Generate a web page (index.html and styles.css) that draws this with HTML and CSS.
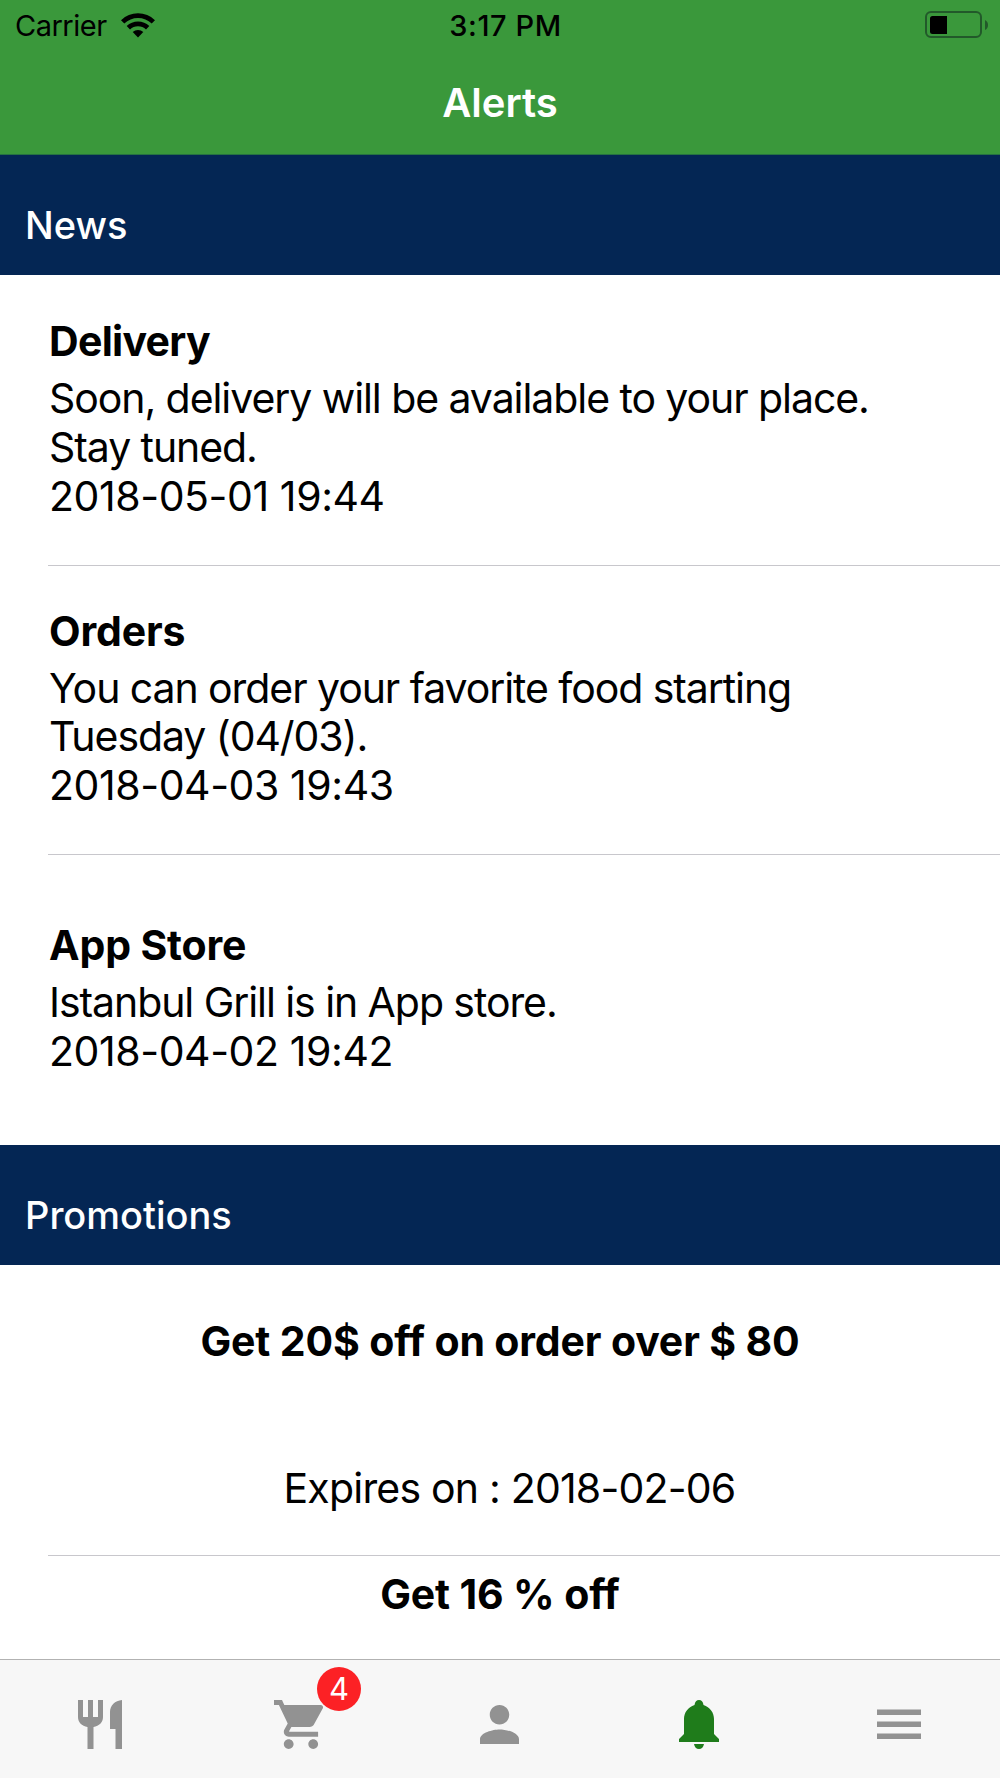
FILE: index.html
```html
<!DOCTYPE html>
<html lang="en">
<head>
  <meta charset="UTF-8" />
  <meta name="viewport" content="width=device-width, initial-scale=1.0"/>
  <title>Alerts</title>
  <link rel="stylesheet" href="styles.css">
</head>
<body>
  <div class="app">
    <header class="navbar">
      <div class="status-bar">
        <div class="carrier">
          <span>Carrier</span>
          <svg class="wifi" viewBox="0 0 34 25">
            <path d="M0 7.2a24.5 24.5 0 0 1 34 0l-3.3 3.4a19.5 19.5 0 0 0-27.4 0z"/>
            <path d="M5.7 13.1a16.3 16.3 0 0 1 22.6 0l-3.3 3.3a11.6 11.6 0 0 0-16 0z"/>
            <path d="M11.7 19.1a7.8 7.8 0 0 1 10.6 0L17 24.5z"/>
          </svg>
        </div>
        <span class="time">3:17 PM</span>
        <svg class="battery" viewBox="0 0 64 28">
          <rect class="battery-case" x="1" y="1" width="55" height="25" rx="5"/>
          <rect x="5" y="5" width="17" height="18" rx="2.5"/>
          <path d="M14 5h8v18h-8z"/>
          <path class="battery-cap" d="M60 9q3 1.5 3 5t-3 5z"/>
        </svg>
      </div>
      <h1>Alerts</h1>
    </header>

    <main class="list">
      <h2>News</h2>
      <article class="news">
        <h3 class="tight">Delivery</h3>
        <p class="message">Soon, delivery will be available to your place.<br>Stay tuned.</p>
        <p class="date">2018-05-01 19:44</p>
      </article>
      <article class="news">
        <h3>Orders</h3>
        <p class="message">You can order your favorite food starting<br>Tuesday (04/03).</p>
        <p class="date">2018-04-03 19:43</p>
      </article>
      <article class="news news-last">
        <h3>App Store</h3>
        <p class="message">Istanbul Grill is in App store.</p>
        <p class="date">2018-04-02 19:42</p>
      </article>

      <h2>Promotions</h2>
      <article class="promo">
        <h3>Get 20$ off on order over $ 80</h3>
        <p class="expires">Expires on : 2018-02-06</p>
      </article>
      <article class="promo promo-short">
        <h3>Get 16 % off</h3>
      </article>
    </main>

    <nav class="tabs">
      <a class="tab tab-menu">
        <svg class="icon" viewBox="0 0 44 49">
          <path d="M0 0h5v17h5V0h5v17h5V0h5v17c0 5.500-3.800 9-9.500 10v22h-6V27C3.800 26 0 22.500 0 17zM44 0v49h-6.500V29H32V12C32 5.500 37 .5 44 0z"/>
        </svg>
      </a>
      <a class="tab tab-cart">
        <svg class="icon cart" viewBox="1 2 20 20" preserveAspectRatio="none">
          <path d="M7 18c-1.100 0-1.990.9-1.990 2S5.900 22 7 22s2-.9 2-2-.9-2-2-2zM1 2v2h2l3.600 7.590-1.350 2.450c-.16.280-.25.610-.25.960 0 1.100.9 2 2 2h12v-2H7.420c-.14 0-.25-.11-.25-.25l.03-.12.900-1.630h7.450c.75 0 1.410-.41 1.750-1.030l3.580-6.490A1 1 0 0 0 20 4H5.210l-.94-2H1zm16 16c-1.100 0-1.990.9-1.990 2s.89 2 1.990 2 2-.9 2-2-.9-2-2-2z"/>
        </svg>
        <span class="badge">4</span>
      </a>
      <a class="tab">
        <svg class="icon person" viewBox="4 4 16 16">
          <path d="M12 12c2.210 0 4-1.790 4-4s-1.790-4-4-4-4 1.790-4 4 1.790 4 4 4zm0 2c-2.670 0-8 1.340-8 4v2h16v-2c0-2.660-5.330-4-8-4z"/>
        </svg>
      </a>
      <a class="tab active">
        <svg class="icon bell" viewBox="0 0 40 49">
          <path d="M20 0c2.500 0 4 1.600 4.500 5C31 7.500 35 12.500 35 19v15l5 5v3H0v-3l5-5V19C5 12.500 9 7.500 15.500 5 16 1.600 17.500 0 20 0zM15 44h10c-.5 3-2.300 5-5 5s-4.500-2-5-5z"/>
        </svg>
      </a>
      <a class="tab">
        <svg class="icon" viewBox="0 0 44 30">
          <path d="M0 0h44v5.500H0zM0 12h44v5.500H0zM0 24h44v5.500H0z"/>
        </svg>
      </a>
    </nav>
  </div>
</body>
</html>
```

FILE: styles.css
```css
* {
  box-sizing: border-box;
}

body {
  margin: 0;
  background: #fff;
  color: #000;
  font-family: Inter, "Liberation Sans", sans-serif;
}

h1, h2, h3, p {
  margin: 0;
}

.app {
  display: flex;
  flex-direction: column;
  height: 1778px;
  overflow: hidden;
}

.navbar {
  height: 155px;
  background: #3a983b;
  border-bottom: 1px solid #267242;
  flex-shrink: 0;
}

.status-bar {
  display: grid;
  grid-template-columns: 1fr auto 1fr;
  align-items: center;
  height: 50px;
  padding: 0 11px 0 15px;
}

.carrier {
  display: flex;
  align-items: center;
  gap: 14px;
  font-size: 29px;
  letter-spacing: -0.5px;
}

.wifi {
  width: 34px;
  height: 25px;
}

.time {
  font-size: 29px;
  font-weight: 550;
  letter-spacing: 0.6px;
  padding-left: 7px;
}

.battery {
  width: 64px;
  height: 28px;
  justify-self: end;
}

.battery-case {
  fill: none;
  stroke: #22592a;
  stroke-width: 2;
}

.battery-cap {
  fill: #22592a;
}

h1 {
  color: #fff;
  font-size: 40px;
  font-weight: 600;
  line-height: 48px;
  text-align: center;
  padding-top: 29px;
}

.list {
  flex: 1;
  min-height: 0;
  overflow: hidden;
}

h2 {
  height: 120px;
  padding: 47px 25px 0;
  background: #042654;
  color: #fff;
  font-size: 38px;
  font-weight: 550;
  line-height: 46px;
}

h3 {
  font-size: 41px;
  font-weight: 700;
  letter-spacing: -0.15px;
  line-height: 50px;
}

.tight {
  letter-spacing: -0.7px;
}

.news {
  height: 289.500px;
  padding: 0 0 3px 49px;
  display: flex;
  flex-direction: column;
  justify-content: center;
}

.news-last {
  height: 291px;
  padding-bottom: 4px;
}

.news + .news,
.promo + .promo {
  background: linear-gradient(#c8c7cc, #c8c7cc) 48px 0 / 100% 1px no-repeat;
}

.message, .date, .expires {
  font-size: 41px;
  line-height: 48.700px;
  white-space: nowrap;
}

.message {
  padding-top: 8px;
  letter-spacing: -1.070px;
}

.date {
  letter-spacing: -0.420px;
}

.promo {
  height: 290px;
  padding-top: 51px;
  text-align: center;
}

.expires {
  padding: 98px 0 0 19px;
  letter-spacing: -0.8px;
}

.promo-short {
  padding-top: 14px;
}

.tabs {
  display: flex;
  flex-shrink: 0;
  height: 119px;
  background: #f7f7f7;
  border-top: 1px solid #b2b2b2;
}

.tab {
  position: relative;
  width: 20%;
  display: flex;
  align-items: center;
  justify-content: center;
  padding: 11px 2px 0 0;
}

.tab-menu {
  padding-right: 0;
}

.tab-cart {
  padding-right: 4px;
}

.icon {
  width: 44px;
  height: 49px;
  fill: #929292;
}

.cart {
  width: 49px;
}

.person {
  width: 39px;
  height: 39px;
}

.bell {
  width: 40px;
}

.active .icon {
  fill: #1f7c1b;
}

.badge {
  position: absolute;
  left: 117px;
  top: 7px;
  width: 44px;
  height: 44px;
  border-radius: 50%;
  background: #fc2125;
  color: #fff;
  font-size: 31px;
  line-height: 43px;
  text-align: center;
}
```
